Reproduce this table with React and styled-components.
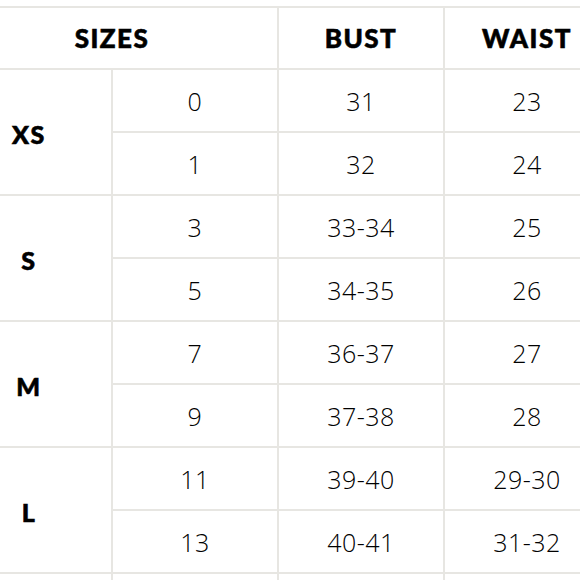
import React from 'react';
import styled, { createGlobalStyle } from 'styled-components';

const groups = [
  { label: 'XS', rows: [['0', '31', '23'], ['1', '32', '24']] },
  { label: 'S', rows: [['3', '33-34', '25'], ['5', '34-35', '26']] },
  { label: 'M', rows: [['7', '36-37', '27'], ['9', '37-38', '28']] },
  { label: 'L', rows: [['11', '39-40', '29-30'], ['13', '40-41', '31-32']] },
  { label: '', rows: [['', '', ''], ['', '', '']] },
];

function App() {
  return (
    <>
      <GlobalStyle />
      <Page>
        <Table>
          <HeadCell span={2}>SIZES</HeadCell>
          <HeadCell>BUST</HeadCell>
          <HeadCell>WAIST</HeadCell>
          {groups.map((g, gi) => (
            <React.Fragment key={gi}>
              <GroupCell>{g.label}</GroupCell>
              {g.rows.map((r, ri) => (
                <React.Fragment key={ri}>
                  {r.map((v, vi) => (
                    <Cell key={vi}>{v}</Cell>
                  ))}
                </React.Fragment>
              ))}
            </React.Fragment>
          ))}
        </Table>
      </Page>
    </>
  );
}

const GlobalStyle = createGlobalStyle`
  html, body {
    margin: 0;
    padding: 0;
    background: #fff;
    overflow: hidden;
  }
`

const Page = styled.div`
  width: 580px;
  height: 580px;
  overflow: hidden;
  background: #fff;
  padding-top: 6px;
  box-sizing: border-box;
`

const Table = styled.div`
  display: grid;
  grid-template-columns: repeat(4, 164px);
  grid-template-rows: 60px;
  grid-auto-rows: 61px;
  gap: 2px;
  padding-top: 2px;
  margin-left: -53px;
  width: max-content;
  background: #e7e6e2;
`

const BaseCell = styled.div`
  background: #fff;
  display: flex;
  align-items: center;
  justify-content: center;
  color: #000;
`

const HeadCell = styled(BaseCell)`
  grid-column: span ${ props => props.span || 1 };
  font-family: Lato, "Liberation Sans", sans-serif;
  font-weight: 900;
  font-size: 26px;
  letter-spacing: 1.5px;
  -webkit-text-stroke: 0.6px #000;
`

const GroupCell = styled(BaseCell)`
  grid-row: span 2;
  font-family: Lato, "Liberation Sans", sans-serif;
  font-weight: 900;
  font-size: 25px;
  letter-spacing: 1.5px;
  -webkit-text-stroke: 0.6px #000;
  padding-top: 4px;
`

const Cell = styled(BaseCell)`
  font-family: "Open Sans", sans-serif;
  font-weight: 300;
  font-size: 25px;
  letter-spacing: 0.5px;
`

export default App;
